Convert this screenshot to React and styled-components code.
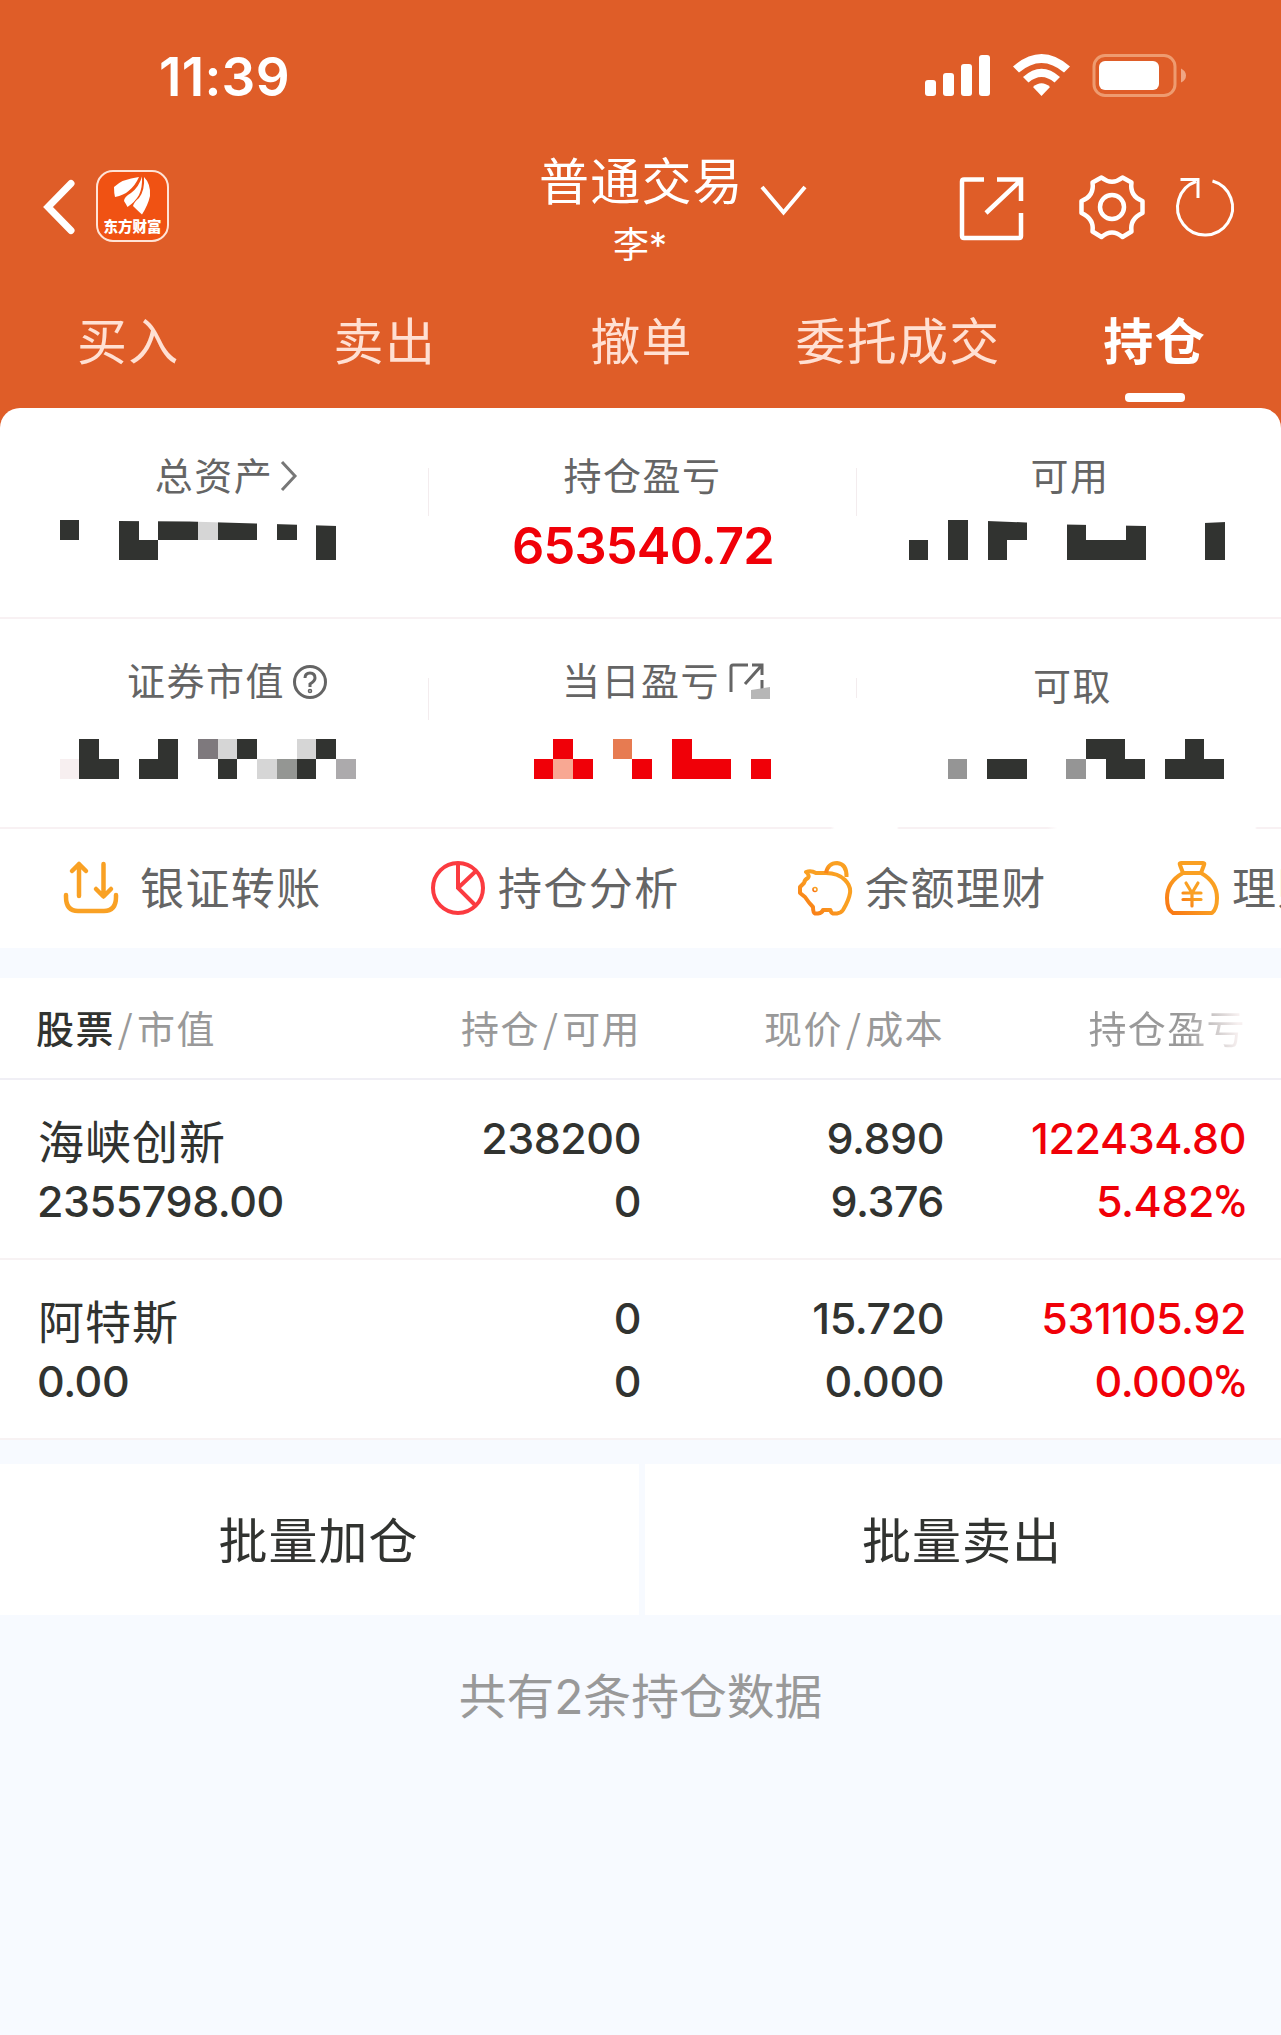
import React from 'react';
import styled, { createGlobalStyle, css } from 'styled-components';

const GlobalStyle = createGlobalStyle`
  * { box-sizing: border-box; }
  body {
    margin: 0;
    background: #f7faff;
    font-family: Inter, "Noto Sans CJK SC", sans-serif;
    color: #313330;
  }
`;

const Page = styled.div`
  width: 1281px;
  height: 2035px;
  overflow: hidden;
  background: #f7faff;
`;

const Header = styled.header`
  height: 428px;
  background: #df5d28;
  color: #fff;
`;

const StatusBar = styled.div`
  display: flex;
  justify-content: space-between;
  height: 150px;
  padding: 44px 94px 0 159px;
`;

const Clock = styled.div`
  font-size: 53px;
  font-weight: 600;
  line-height: 66px;
  letter-spacing: 0.3px;
`;

const StatusIcons = styled.svg`
  display: block;
  margin-top: 8px;
`;

const TitleBar = styled.div`
  display: grid;
  grid-template-columns: 440px 1fr 341px;
  height: 140px;
`;

const Side = styled.div`
  display: flex;
  align-items: flex-start;
  padding: ${p => (p.$right ? '23px 0 0 17px' : '20px 0 0 42px')};
  gap: ${p => (p.$right ? '0' : '20px')};
`;

const BackIcon = styled.svg`
  margin-top: 9px;
`;

const Logo = styled.div`
  display: flex;
  flex-direction: column;
  align-items: center;
  width: 73px;
  height: 72px;
  padding-top: 4px;
  border: 2px solid #ffe3d6;
  border-radius: 17px;
  background: #f05213;
`;

const LogoText = styled.span`
  margin-top: 2px;
  font-family: "Noto Sans CJK SC", sans-serif;
  font-size: 14.5px;
  font-weight: 900;
  line-height: 18px;
  white-space: nowrap;
`;

const TitleBlock = styled.div`
  display: flex;
  align-items: flex-start;
  padding-left: 99px;
`;

const Account = styled.div`
  text-align: center;
`;

const Title = styled.div`
  width: 202px;
  font-size: 50px;
  line-height: 65px;
  letter-spacing: 1.2px;
  white-space: nowrap;
`;

const Owner = styled.div`
  font-size: 36px;
  line-height: 46px;
  margin-top: 7px;
`;

const ChevronDown = styled.svg`
  margin-left: 19px;
`;

const TabBar = styled.nav`
  display: grid;
  grid-template-columns: repeat(5, 256.6px);
`;

const Tab = styled.div`
  display: flex;
  flex-direction: column;
  align-items: center;
  gap: 11px;
  padding-top: 12px;
  font-size: 50px;
  line-height: 80px;
  letter-spacing: 1.3px;
  color: ${p => (p.$active ? '#fff' : '#ffe0d3')};
  font-weight: ${p => (p.$active ? 700 : 400)};
  white-space: nowrap;
  &::after {
    content: '';
    width: 60px;
    height: 9px;
    border-radius: 4px;
    background: ${p => (p.$active ? '#fff' : 'transparent')};
  }
`;

const Summary = styled.section`
  margin-top: -20px;
  border-radius: 20px 20px 0 0;
  background: #fff;
`;

const SummaryRow = styled.div`
  display: grid;
  grid-template-columns: 429px 428px 424px;
  height: ${p => p.$height}px;
  padding-top: ${p => p.$top}px;
  border-bottom: 2px solid #f8f1f3;
  ${p => p.$broken && css`
    border-image: linear-gradient(90deg, #f8f1f3 830px, #fff 834px 896px, #f8f1f3 898px 1046px, #fff 1056px 1253px, #f8f1f3 1255px) 2;
    border-top: 0;
  `}
`;

const Metric = styled.div`
  display: flex;
  flex-direction: column;
  align-items: center;
  position: relative;
  padding-top: ${p => p.$drop || 0}px;
  &::after {
    content: '';
    position: absolute;
    right: 0;
    top: ${p => p.$ruleTop}px;
    width: 1px;
    height: ${p => p.$rule}px;
    background: #f3ecee;
  }
`;

const MetricLabel = styled.div`
  display: flex;
  align-items: center;
  gap: 5px;
  height: 56px;
  padding-left: ${p => p.$shift || 0}px;
  padding-right: ${p => p.$back || 0}px;
  font-size: 38px;
  letter-spacing: 1.5px;
  color: #656565;
  white-space: nowrap;
`;

const LabelIcon = styled.svg`
  flex: none;
  margin-top: ${p => p.$nudge}px;
`;

const Amount = styled.div`
  font-size: 50.5px;
  font-weight: 600;
  line-height: 64px;
  margin-top: 13px;
  letter-spacing: -0.8px;
  color: #f00008;
`;

const Mask = styled.svg`
  display: block;
  align-self: flex-start;
  margin-top: ${p => p.$top}px;
  margin-left: ${p => p.$left}px;
`;

const Shortcuts = styled.nav`
  display: flex;
  height: 119px;
  padding-left: 60px;
  background: #fff;
  overflow: hidden;
`;

const Shortcut = styled.div`
  display: flex;
  flex: none;
  align-items: center;
  width: ${p => p.$width || 367}px;
  padding-bottom: 1px;
  gap: ${p => p.$gap}px;
  font-size: 44px;
  letter-spacing: 1.4px;
  color: #656565;
  white-space: nowrap;
`;

const ShortcutText = styled.span`
  padding-bottom: 4px;
`;

const Holdings = styled.section`
  margin-top: 30px;
  background: #fff;
`;

const columns = css`
  display: grid;
  grid-template-columns: 304px 300px 303px 302px;
  padding-left: 37px;
`;

const HeadRow = styled.div`
  ${columns}
  height: 102px;
  align-items: center;
  padding-bottom: 4px;
  border-bottom: 2px solid #f0eff5;
  font-family: "Noto Sans CJK SC", sans-serif;
  font-size: 38px;
  letter-spacing: 1.4px;
  color: #999;
`;

const HeadCell = styled.div`
  text-align: ${p => (p.$left ? 'left' : 'right')};
  margin-left: ${p => (p.$left ? -1 : 0)}px;
  white-space: nowrap;
`;

const Strong = styled.span`
  color: #313330;
  font-weight: 500;
`;

const Slash = styled.span`
  margin: 0 3px;
`;

const Fade = styled.span`
  background: linear-gradient(90deg, #999 62%, #f7f0f0 95%);
  background-clip: text;
  color: transparent;
`;

const StockRow = styled.div`
  ${columns}
  height: 180px;
  padding-top: 27px;
  border-bottom: 2px solid #f7f2f3;
`;

const Cell = styled.div`
  display: flex;
  flex-direction: column;
  align-items: ${p => (p.$left ? 'flex-start' : 'flex-end')};
  font-size: 43px;
  font-weight: 500;
  line-height: 63px;
  letter-spacing: -0.45px;
  color: ${p => (p.$red ? '#f00008' : '#313330')};
`;

const StockName = styled.span`
  height: 63px;
  padding: 4px 0 0 1px;
  font-size: 46px;
  font-weight: 400;
  letter-spacing: 1px;
`;

const Percent = styled.span`
  font-family: Roboto, sans-serif;
  font-size: 44px;
  line-height: 1;
`;

const Actions = styled.div`
  display: grid;
  grid-template-columns: 639px 636px;
  gap: 6px;
  margin-top: 24px;
`;

const Action = styled.button`
  height: 151px;
  padding: 0 2px 5px 0;
  border: 0;
  background: #fff;
  color: #313330;
  font: inherit;
  font-size: 49px;
  letter-spacing: 1px;
`;

const Footer = styled.p`
  margin: 47px 0 0;
  font-size: 47.8px;
  line-height: 70px;
  text-align: center;
  color: #999;
`;

// size of one mosaic tile
const TILE_W = 19.75;
const TILE_H = 20;

const K = '#313330';
const R = '#f00008';

// tiles are [column, row, color, columns wide, rows high]
const Mosaic = ({ tiles, width, left, top, cut }) => (
  <Mask width={width} height="40" $left={left} $top={top}>
    <g shapeRendering="crispEdges">
      {tiles.map(([c, r, fill, w = 1, h = 1], i) => (
        <rect key={i} x={c * TILE_W + 0.5} y={r * TILE_H} width={w * TILE_W} height={h * TILE_H} fill={fill} />
      ))}
    </g>
    {cut && <polygon points={cut} fill="#fff" />}
  </Mask>
);

const totalTiles = [
  [0, 0, K], [3, 0, K, 1, 2], [4, 1, K], [5, 0, K, 2], [7, 0, '#d6d6d6'],
  [8, 0, K, 2], [11, 0, K], [13, 0, K, 1, 2],
];
const usableTiles = [
  [0, 1, K], [2, 0, K, 1, 2], [4, 0, K, 1, 2], [5, 0, K], [8, 0, K, 1, 2],
  [9, 1, K, 2], [11, 0, K, 1, 2], [15, 0, K, 1, 2],
];
const marketTiles = [
  [0, 1, '#f7eff0'], [1, 0, K, 1, 2], [2, 1, K], [4, 1, K], [5, 0, K, 1, 2],
  [7, 0, '#7e797d'], [8, 0, '#d6d6d6'], [9, 0, K], [8, 1, K], [10, 1, '#d6d6d6'],
  [11, 1, '#949693'], [12, 0, '#d6d6d6'], [12, 1, K], [13, 0, K], [14, 1, '#acaaac'],
];
const dayTiles = [
  [0, 1, R], [1, 0, R], [1, 1, '#f8a893'], [2, 1, R], [4, 0, '#e77b51'], [5, 1, R],
  [7, 0, R, 1, 2], [8, 1, R, 2], [11, 1, R],
];
const cashTiles = [
  [0, 1, '#959595'], [2, 1, K, 2], [6, 1, '#959595'], [7, 0, K, 2], [8, 1, K, 2],
  [11, 1, K, 3], [12, 0, K],
];

const stocks = [
  { name: '海峡创新', value: '2355798.00', held: '238200', usable: '0', price: '9.890', cost: '9.376', profit: '122434.80', rate: '5.482' },
  { name: '阿特斯', value: '0.00', held: '0', usable: '0', price: '15.720', cost: '0.000', profit: '531105.92', rate: '0.000' },
];

const Status = () => (
  <StatusIcons width="264" height="48" viewBox="0 0 264 48" fill="#fff">
    <rect x="2" y="28" width="11" height="16" rx="3" />
    <rect x="20" y="21" width="11" height="23" rx="3" />
    <rect x="38" y="12" width="11" height="32" rx="3" />
    <rect x="56" y="3" width="11" height="41" rx="3" />
    <path d="M90 14.500Q118.500 -10.500 147 14.500L141 20.500Q118.500 1.500 96 20.500Z" />
    <path d="M100 25Q118.500 8.500 137 25L131.500 30.500Q118.500 19.500 105.500 30.500Z" />
    <path d="M110 35Q118.500 27.500 127 35L118.500 44Z" />
    <rect x="171" y="3.500" width="81" height="40" rx="11" fill="none" stroke="#ee9b70" strokeWidth="3" />
    <rect x="176" y="9" width="60" height="29" rx="6" />
    <path d="M258 16.500Q263 19 263 23.500Q263 28 258 30.500Z" fill="#f0a684" />
  </StatusIcons>
);

const HeaderIcons = () => (
  <svg width="285" height="70" viewBox="0 0 285 70" fill="none" stroke="#fff">
    <path d="M27 6.500H7Q5 6.500 5 8.500V63Q5 65 7 65H62Q64 65 64 63V40 M40 6.500H64V28 M63 8L29 40" strokeWidth="4.500" />
    <path d="M144.500 4.500Q155 13 165.500 4.500L174.500 9.500Q172.500 23 185.500 28V40Q172.500 46 174.500 58.500L165.500 64Q155 55 144.500 64L135.500 58.500Q137.500 46 124.500 40V28Q137.500 23 135.500 9.500Z" strokeWidth="4.500" strokeLinejoin="round" />
    <circle cx="155" cy="34" r="12" strokeWidth="4.500" />
    <path d="M255.500 8A27.500 27.500 0 1 1 239 8.500 M223.500 6.500H241V25" strokeWidth="3" />
  </svg>
);

const Petals = () => (
  <svg width="37" height="39" viewBox="0 0 37 39" fill="#fff">
    <path d="M25 1Q8 3 0 11Q0 17 1 21Q10 19 14.500 15Q21 10 25 1Z" />
    <path d="M28 0.500Q25 11 17 17Q10 21 10 25Q12 28 13.500 31Q21 26 25 19Q28.500 12 28 0.500Z" />
    <path d="M30 1Q31 14 25 22Q20 26 19 30Q24 35 28 38.500Q34 29 36 20Q37 8 30 1Z" />
  </svg>
);

const TransferIcon = () => (
  <svg width="60" height="56" viewBox="0 0 60 56" fill="none" stroke="#f9a124" strokeWidth="4.500" strokeLinecap="round" strokeLinejoin="round">
    <path d="M6 35V37Q6 51 18 51H44Q56 51 56 37V35 M19 36V4 M12 11L19 4L26 11 M43.500 4V36 M36 29L43.500 36.500L51 29" />
  </svg>
);

const AnalysisIcon = () => (
  <svg width="56" height="56" viewBox="0 0 56 56" fill="none" stroke="#fb3b40" strokeWidth="4">
    <circle cx="28" cy="28" r="25" />
    <path d="M28 3V28L46 46 M28 28L46 11" />
  </svg>
);

const Warm = ({ id }) => (
  <linearGradient id={id} x1="0" y1="1" x2="1" y2="0">
    <stop offset="0" stopColor="#f97514" />
    <stop offset="0.5" stopColor="#faa022" />
  </linearGradient>
);

const PigIcon = () => (
  <svg width="56" height="56" viewBox="0 0 56 56" fill="none" stroke="url(#pig)" strokeWidth="4" strokeLinejoin="round">
    <Warm id="pig" />
    <path d="M11 18Q13 15 9 12Q14 10 19 13H29Q41 13 48 20Q54 26 53 33Q52 40 46 50Q44 53 40 53.500H36Q34 53 33.500 50H26Q25 53 21 53.500H18Q16 53 16 47Q12 43 8 37L3 33V27L7 23Q8 19 11 18Z" />
    <path d="M29 13Q31 3 40 3Q50 4 49.500 17" />
    <circle cx="18" cy="29.500" r="0.800" />
  </svg>
);

const BagIcon = () => (
  <svg width="56" height="56" viewBox="0 0 56 56" fill="none" stroke="url(#bag)" strokeWidth="4" strokeLinejoin="round" strokeLinecap="round">
    <Warm id="bag" />
    <path d="M19 13L16 5Q15 3 17 3H39Q41 3 40 5L37 13 M19 13H37Q53 22 53 38Q53 49 48 53H9Q3 50 3 38Q3 22 19 13Z" />
    <path d="M22 23L28 33L34 23 M28 33V46 M19 33H37 M19 39.500H37" strokeWidth="3.200" />
  </svg>
);

class App extends React.Component {
  render() {
    return (
      <Page>
        <GlobalStyle />
        <Header>
          <StatusBar>
            <Clock>11:39</Clock>
            <Status />
          </StatusBar>
          <TitleBar>
            <Side>
              <BackIcon width="34" height="56" viewBox="0 0 34 56" fill="none" stroke="#fff" strokeWidth="7" strokeLinecap="round">
                <path d="M29 4.500L6 28L29 51.500" />
              </BackIcon>
              <Logo>
                <Petals />
                <LogoText>东方财富</LogoText>
              </Logo>
            </Side>
            <TitleBlock>
              <Account>
                <Title>普通交易</Title>
                <Owner>李*</Owner>
              </Account>
              <ChevronDown width="50" height="70" viewBox="0 0 50 70" fill="none" stroke="#fff" strokeWidth="4">
                <path d="M2 37L23.500 62.500L45 37" />
              </ChevronDown>
            </TitleBlock>
            <Side $right>
              <HeaderIcons />
            </Side>
          </TitleBar>
          <TabBar>
            <Tab>买入</Tab>
            <Tab>卖出</Tab>
            <Tab>撤单</Tab>
            <Tab>委托成交</Tab>
            <Tab $active>持仓</Tab>
          </TabBar>
        </Header>

        <Summary>
          <SummaryRow $height={211} $top={37}>
            <Metric $ruleTop={23} $rule={48}>
              <MetricLabel $shift={24}>
                总资产
                <LabelIcon $nudge={5} width="20" height="36" viewBox="0 0 20 36" fill="none" stroke="#777" strokeWidth="3">
                  <path d="M4 4L17 18L4 32" />
                </LabelIcon>
              </MetricLabel>
              <Mosaic tiles={totalTiles} width={278} left={59} top={19} cut="40,0 278,0 278,6 198,3.500 130,1.500 60,1" />
            </Metric>
            <Metric $ruleTop={23} $rule={48}>
              <MetricLabel $back={1}>持仓盈亏</MetricLabel>
              <Amount>653540.72</Amount>
            </Metric>
            <Metric $rule={0}>
              <MetricLabel $shift={2}>可用</MetricLabel>
              <Mosaic tiles={usableTiles} width={318} left={51} top={19} cut="60,0 318,0 318,2 296,3 237,6 157,4.500 118,2.500 79,1" />
            </Metric>
          </SummaryRow>
          <SummaryRow $height={210} $top={31} $broken>
            <Metric $ruleTop={28} $rule={42}>
              <MetricLabel $shift={26}>
                证券市值
                <LabelIcon $nudge={7} width="38" height="38" viewBox="0 0 38 38" fill="none" stroke="#656565" strokeWidth="3">
                  <circle cx="20" cy="19" r="15.500" />
                  <path d="M15 15Q15 10 20 10Q25 10 25 15Q25 18 20 21V24" />
                  <circle cx="20" cy="28" r="0.800" />
                </LabelIcon>
              </MetricLabel>
              <Mosaic tiles={marketTiles} width={298} left={59} top={33} />
            </Metric>
            <Metric $ruleTop={28} $rule={20}>
              <MetricLabel $shift={47}>
                当日盈亏
                <LabelIcon $nudge={4} width="46" height="38" viewBox="0 0 46 38" fill="none" stroke="#656565" strokeWidth="3">
                  <path d="M6 31V6Q6 4 8 4H23 M27 4H37V14 M37 4L20 23 M37 19V28" />
                  <path d="M26 29L45 26V38H26Z" fill="#b6b6b6" stroke="none" />
                </LabelIcon>
              </MetricLabel>
              <Mosaic tiles={dayTiles} width={238} left={104} top={33} />
            </Metric>
            <Metric $rule={0} $drop={5}>
              <MetricLabel $shift={7}>可取</MetricLabel>
              <Mosaic tiles={cashTiles} width={278} left={90} top={28} />
            </Metric>
          </SummaryRow>
        </Summary>

        <Shortcuts>
          <Shortcut $gap={20} $width={370}><TransferIcon /><ShortcutText>银证转账</ShortcutText></Shortcut>
          <Shortcut $gap={12}><AnalysisIcon /><ShortcutText>持仓分析</ShortcutText></Shortcut>
          <Shortcut $gap={12}><PigIcon /><ShortcutText>余额理财</ShortcutText></Shortcut>
          <Shortcut $gap={12}><BagIcon /><ShortcutText>理财</ShortcutText></Shortcut>
        </Shortcuts>

        <Holdings>
          <HeadRow>
            <HeadCell $left><Strong>股票</Strong><Slash>/</Slash>市值</HeadCell>
            <HeadCell>持仓<Slash>/</Slash>可用</HeadCell>
            <HeadCell>现价<Slash>/</Slash>成本</HeadCell>
            <HeadCell><Fade>持仓盈亏</Fade></HeadCell>
          </HeadRow>
          {stocks.map(s => (
            <StockRow key={s.name}>
              <Cell $left><StockName>{s.name}</StockName><span>{s.value}</span></Cell>
              <Cell><span>{s.held}</span><span>{s.usable}</span></Cell>
              <Cell><span>{s.price}</span><span>{s.cost}</span></Cell>
              <Cell $red><span>{s.profit}</span><span>{s.rate}<Percent>%</Percent></span></Cell>
            </StockRow>
          ))}
        </Holdings>

        <Actions>
          <Action>批量加仓</Action>
          <Action>批量卖出</Action>
        </Actions>
        <Footer>共有2条持仓数据</Footer>
      </Page>
    );
  }
}

export default App;
